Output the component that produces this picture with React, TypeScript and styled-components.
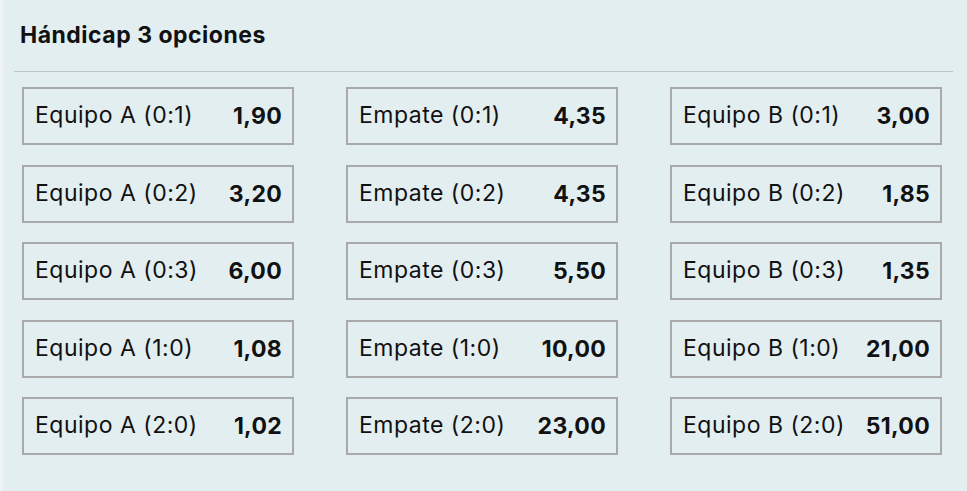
import React from "react";
import styled, { createGlobalStyle } from "styled-components";

const Global = createGlobalStyle`
  html, body { margin: 0; padding: 0; background: #eef4f6; }
  body { font-family: Inter, "Noto Sans", sans-serif; color: #111; }
`;

const Card = styled.section`
  margin-left: 3px;
  min-height: 491px;
  background: #e3eef1;
  box-sizing: border-box;
  padding-top: 19px;
`;

const Title = styled.h2`
  margin: 0 0 0 17px;
  font-size: 23px;
  line-height: 32px;
  font-weight: 700;
  letter-spacing: 0.5px;
  color: #111;
`;

const Divider = styled.hr`
  margin: 20px 14px 0 11px;
  border: 0;
  border-top: 1px solid #bcc3c5;
  height: 0;
`;

const Grid = styled.div`
  display: grid;
  grid-template-columns: repeat(3, 272px);
  column-gap: 52px;
  row-gap: 19.5px;
  padding: 15px 0 0 19px;
`;

const Option = styled.button`
  display: flex;
  align-items: center;
  justify-content: space-between;
  height: 58px;
  box-sizing: border-box;
  border: 2px solid #a9a9a9;
  background: transparent;
  padding: 0 10px 0 11px;
  font-family: inherit;
  color: #111;
  cursor: pointer;
`;

const Label = styled.span`
  font-size: 23px;
  font-weight: 400;
  letter-spacing: 0.5px;
  margin-top: -2px;
`;

const Odds = styled.span`
  font-size: 23px;
  font-weight: 700;
  letter-spacing: 0.3px;
`;

const rows: [string, string][][] = [
  [["Equipo A (0:1)", "1,90"], ["Empate (0:1)", "4,35"], ["Equipo B (0:1)", "3,00"]],
  [["Equipo A (0:2)", "3,20"], ["Empate (0:2)", "4,35"], ["Equipo B (0:2)", "1,85"]],
  [["Equipo A (0:3)", "6,00"], ["Empate (0:3)", "5,50"], ["Equipo B (0:3)", "1,35"]],
  [["Equipo A (1:0)", "1,08"], ["Empate (1:0)", "10,00"], ["Equipo B (1:0)", "21,00"]],
  [["Equipo A (2:0)", "1,02"], ["Empate (2:0)", "23,00"], ["Equipo B (2:0)", "51,00"]],
];

export default function App() {
  return (
    <>
      <Global />
      <Card>
        <Title>Hándicap 3 opciones</Title>
        <Divider />
        <Grid>
          {rows.flat().map(([label, odds]) => (
            <Option key={label}>
              <Label>{label}</Label>
              <Odds>{odds}</Odds>
            </Option>
          ))}
        </Grid>
      </Card>
    </>
  );
}
